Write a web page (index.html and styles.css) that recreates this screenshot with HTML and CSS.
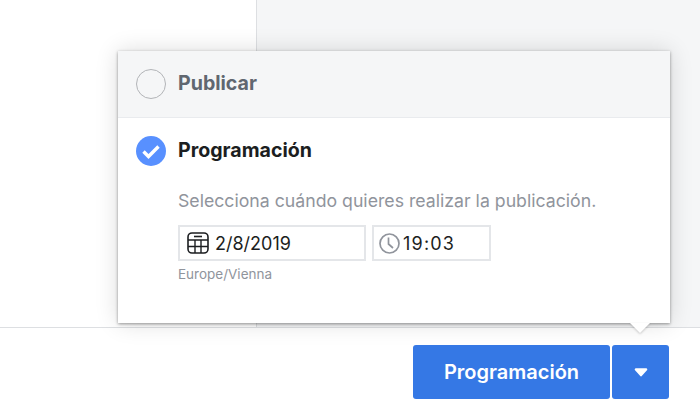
FILE: index.html
```html
<!DOCTYPE html>
<html lang="es">
<head>
    <meta charset="UTF-8">
    <title>Programación</title>
    <link rel="stylesheet" href="styles.css">
</head>
<body>
    <div class="page">
        <div class="content">
            <div class="side"></div>
            <div class="main"></div>
        </div>
        <div class="footer">
            <button class="btn btn-main">Programación</button>
            <button class="btn btn-caret">
                <svg width="14" height="9" viewBox="0 0 14 9"><path d="M2 1.500h10L7 7z" fill="#fff" stroke="#fff" stroke-width="2.600" stroke-linejoin="round"/></svg>
            </button>
        </div>
    </div>

    <div class="popover">
        <div class="option option-off">
            <span class="radio"></span>
            <span class="option-title">Publicar</span>
        </div>
        <div class="option option-on">
            <svg class="check" width="30" height="30" viewBox="0 0 30 30">
                <circle cx="15" cy="15" r="15" fill="#5890ff"/>
                <path d="M7.500 15.500l5 5L22.500 10.500" fill="none" stroke="#fff" stroke-width="3.400"/>
            </svg>
            <span class="option-title">Programación</span>
        </div>
        <div class="schedule">
            <p class="hint">Selecciona cuándo quieres realizar la publicación.</p>
            <div class="fields">
                <div class="field field-date">
                    <svg width="22" height="22" viewBox="0 0 22 22" fill="none" stroke="#1c1e21" stroke-width="1.600">
                        <rect x="1" y="1" width="20" height="20" rx="4"/>
                        <path d="M7 4.500h8"/>
                        <path d="M1 8h20M1 14.500h20M8 8v13M14 8v13" stroke-width="1.400"/>
                    </svg>
                    <span>2/8/2019</span>
                </div>
                <div class="field field-time">
                    <svg width="21" height="21" viewBox="0 0 21 21" fill="none" stroke="#90949c" stroke-width="1.700">
                        <circle cx="10.500" cy="10.500" r="9.500"/>
                        <path d="M9.500 4.500v6.500l4.500 4"/>
                    </svg>
                    <span class="time">19:03</span>
                </div>
            </div>
            <p class="timezone">Europe/Vienna</p>
        </div>
    </div>
    <div class="arrow"></div>
</body>
</html>
```

FILE: styles.css
```css
* {
    margin: 0;
    padding: 0;
    box-sizing: border-box;
}

body {
    font-family: 'Inter', 'Liberation Sans', sans-serif;
    background: #fff;
    width: 700px;
    height: 407px;
    overflow: hidden;
    position: relative;
}

.page {
    height: 407px;
    display: flex;
    flex-direction: column;
}

.content {
    height: 327px;
    display: flex;
}

.side {
    width: 256px;
    background: #fff;
}

.main {
    flex: 1;
    background: #f5f6f7;
    border-left: 1px solid #dddfe2;
}

.footer {
    height: 80px;
    border-top: 1px solid #dddfe2;
    background: #fff;
    display: flex;
    justify-content: flex-end;
    gap: 2px;
    padding: 17px 31px 0 0;
}

.btn {
    height: 54px;
    border: none;
    border-radius: 3px;
    background: #3578e5;
    color: #fff;
    font-family: inherit;
    font-size: 20px;
    font-weight: 600;
}

.btn-main {
    width: 197px;
}

.btn-caret {
    width: 57px;
    display: flex;
    align-items: center;
    justify-content: center;
}

/* popover sits over the page */
.popover {
    position: absolute;
    left: 118px;
    top: 51px;
    width: 552px;
    height: 272px;
    background: #fff;
    box-shadow: 0 1px 3px rgba(0, 0, 0, 0.4), 0 0 22px rgba(0, 0, 0, 0.14);
}

.arrow {
    position: absolute;
    left: 630px;
    top: 323px;
    width: 0;
    height: 0;
    border-left: 10px solid transparent;
    border-right: 10px solid transparent;
    border-top: 10px solid #fff;
    filter: drop-shadow(0 1px 1px rgba(0, 0, 0, 0.2));
}

.option {
    display: flex;
    align-items: center;
    gap: 12px;
    padding-left: 18px;
}

.option-off {
    height: 67px;
    background: #f5f6f7;
    border-bottom: 1px solid #e9ebee;
    color: #606770;
}

.option-on {
    height: 66px;
    color: #1c1e21;
}

.option-title {
    font-size: 19.600px;
    font-weight: 700;
    line-height: 24px;
    margin-top: -2px;
}

.radio {
    width: 30px;
    height: 30px;
    border-radius: 50%;
    border: 1.500px solid #b2b4b7;
    background: #f5f6f7;
}

.schedule {
    padding: 7px 0 0 60px;
}

.hint {
    font-size: 17.700px;
    line-height: 20px;
    color: #90949c;
}

.fields {
    display: flex;
    gap: 6px;
    margin-top: 14px;
}

.field {
    height: 36px;
    border: 2px solid #e4e6e9;
    display: flex;
    align-items: center;
    font-size: 18px;
    color: #1c1e21;
}

.field-date {
    width: 188px;
    gap: 6px;
    padding-left: 7px;
}

.field-time {
    width: 119px;
    gap: 3px;
    padding-left: 5px;
}

.time {
    letter-spacing: 1.200px;
}

.timezone {
    font-size: 13.500px;
    line-height: 16px;
    margin-top: 5px;
    color: #90949c;
}
```
